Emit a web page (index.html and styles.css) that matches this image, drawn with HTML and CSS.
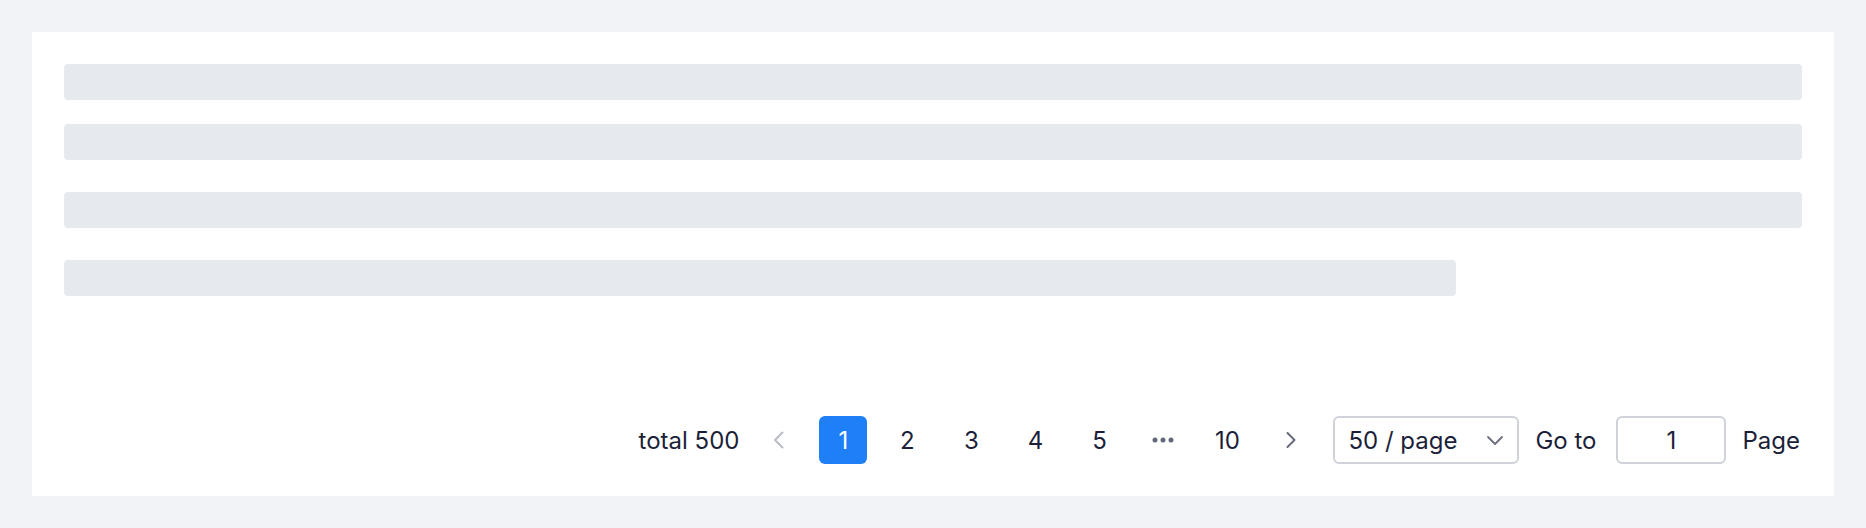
FILE: index.html
```html
<!DOCTYPE html>
<html>
<head>
<meta charset="utf-8">
<link rel="stylesheet" href="styles.css">
</head>
<body>
<div class="card">
  <div class="skeleton">
    <div class="bar bar-first"></div>
    <div class="bar"></div>
    <div class="bar"></div>
    <div class="bar bar-short"></div>
  </div>
  <div class="pagination">
    <span class="total">total 500</span>
    <button class="nav disabled" aria-label="prev">
      <svg width="24" height="24" viewBox="0 0 24 24"><path d="M15.5 4.5 L8 12 L15.5 19.5" fill="none" stroke="currentColor" stroke-width="2" stroke-linecap="round" stroke-linejoin="round"/></svg>
    </button>
    <ul class="pages">
      <li class="page active">1</li>
      <li class="page">2</li>
      <li class="page">3</li>
      <li class="page">4</li>
      <li class="page">5</li>
      <li class="page more"><svg width="22" height="6" viewBox="0 0 22 6"><circle cx="3" cy="3" r="2.5" fill="currentColor"/><circle cx="11" cy="3" r="2.5" fill="currentColor"/><circle cx="19" cy="3" r="2.5" fill="currentColor"/></svg></li>
      <li class="page">10</li>
    </ul>
    <button class="nav" aria-label="next">
      <svg width="24" height="24" viewBox="0 0 24 24"><path d="M8.5 5 L15.5 12 L8.5 19" fill="none" stroke="currentColor" stroke-width="2" stroke-linecap="round" stroke-linejoin="round"/></svg>
    </button>
    <div class="select">
      <span>50 / page</span>
      <svg width="20" height="20" viewBox="0 0 20 20"><path d="M3 7 L10 14 L17 7" fill="none" stroke="currentColor" stroke-width="1.8" stroke-linecap="round" stroke-linejoin="round"/></svg>
    </div>
    <span class="label">Go to</span>
    <div class="jump">1</div>
    <span class="label">Page</span>
  </div>
</div>
</body>
</html>
```

FILE: styles.css
```css
html, body {
  margin: 0;
  padding: 0;
  background: #f2f3f7;
}
body {
  padding: 32px;
  font-family: Inter, "Noto Sans", sans-serif;
  color: #1c1f3a;
}
.card {
  background: #ffffff;
  height: 464px;
  box-sizing: border-box;
  padding: 32px;
  display: flex;
  flex-direction: column;
  justify-content: space-between;
}
.skeleton {
  display: flex;
  flex-direction: column;
  gap: 32px;
}
.bar {
  height: 36px;
  background: #e6e9ee;
  border-radius: 4px;
}
.bar-first {
  margin-bottom: -8px;
}
.bar-short {
  width: 1392px;
}
.pagination {
  display: flex;
  justify-content: flex-end;
  align-items: center;
  height: 48px;
  font-size: 24px;
  padding-right: 2px;
}
.total {
  margin-right: 16px;
}
.nav {
  width: 48px;
  height: 48px;
  border: none;
  background: transparent;
  padding: 0;
  display: flex;
  align-items: center;
  justify-content: center;
  color: #666b7b;
}
.nav.disabled {
  color: #b9bcc6;
}
.pages {
  list-style: none;
  margin: 0 16px;
  padding: 0;
  display: flex;
  gap: 16px;
}
.page {
  width: 48px;
  height: 48px;
  border-radius: 6px;
  display: flex;
  align-items: center;
  justify-content: center;
}
.page.active {
  background: #1e7ff7;
  color: #ffffff;
}
.page.more {
  color: #646979;
}
.select {
  margin-left: 18px;
  width: 186px;
  height: 48px;
  box-sizing: border-box;
  border: 2px solid #cfd2da;
  border-radius: 6px;
  padding: 0 12px 0 13px;
  display: flex;
  align-items: center;
  justify-content: space-between;
}
.select svg {
  color: #6b7080;
}
.label {
  margin-left: 16px;
}
.jump {
  margin-left: 20px;
  margin-right: 16px;
  width: 110px;
  height: 48px;
  box-sizing: border-box;
  border: 2px solid #cfd2da;
  border-radius: 6px;
  display: flex;
  align-items: center;
  justify-content: center;
}
.jump + .label {
  margin-left: 0;
}
```
